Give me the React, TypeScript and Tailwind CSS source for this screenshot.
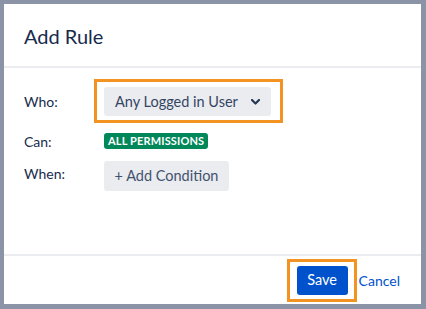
const font = { fontFamily: "Lato, 'Noto Sans', sans-serif" };

export default function App() {
  return (
    <div className="w-[426px] h-[309px] bg-[#8b94a6] pt-[4px] pl-[4px] pr-[5px] pb-[5px]" style={font}>
      <div className="h-full bg-white flex flex-col text-[#172b4d]">
        {/* Header */}
        <div className="h-[64px] shrink-0 pl-[20px] flex items-center border-b-2 border-[#ebecf0]">
          <h1 className="text-[20px] leading-none pt-[2px]">Add Rule</h1>
        </div>

        {/* Body */}
        <div className="flex-1 pl-[20px] pt-[19px] text-[14px]">
          <div className="flex items-center h-[29px]">
            <div className="w-[80px]">Who:</div>
            <div className="relative">
              <button className="h-[29px] w-[167px] rounded-[3px] bg-[#ebecf0] pl-[11px] pr-[11px] flex items-center justify-between text-[#344563] text-[14.5px]">
                <span>Any Logged in User</span>
                <svg width="9" height="6" viewBox="0 0 9 6" fill="none">
                  <path d="M1 1l3.5 3.5L8 1" stroke="#253858" strokeWidth="2.2" strokeLinecap="round" strokeLinejoin="round" />
                </svg>
              </button>
              <span className="absolute -top-[8px] -bottom-[7px] -left-[10px] -right-[12px] border-[3px] border-[#f39321] pointer-events-none" />
            </div>
          </div>

          <div className="flex items-center mt-[17px] h-[16px]">
            <div className="w-[80px]">Can:</div>
            <span className="h-[16px] px-[4px] rounded-[3px] bg-[#00875a] text-white text-[11px] font-bold leading-[16px] tracking-[0.15px]">
              ALL PERMISSIONS
            </span>
          </div>

          <div className="flex items-start mt-[12px]">
            <div className="w-[80px] pt-[2px]">When:</div>
            <button className="h-[30px] w-[125px] rounded-[3px] bg-[#ebecf0] text-[#42526e] text-[14.5px]">+ Add Condition</button>
          </div>
        </div>

        {/* Footer */}
        <div className="h-[50px] shrink-0 border-t-2 border-[#ebecf0] flex items-center justify-end pr-[21px] text-[14px]">
          <div className="relative">
            <button className="h-[29px] w-[51px] rounded-[3px] bg-[#0052cc] text-white text-[14.5px]">Save</button>
            <span className="absolute -top-[7px] -bottom-[7px] -left-[10px] -right-[9px] border-[3px] border-[#f39321] pointer-events-none" />
          </div>
          <a className="ml-[11px] text-[#0052cc]">Cancel</a>
        </div>
      </div>
    </div>
  );
}
